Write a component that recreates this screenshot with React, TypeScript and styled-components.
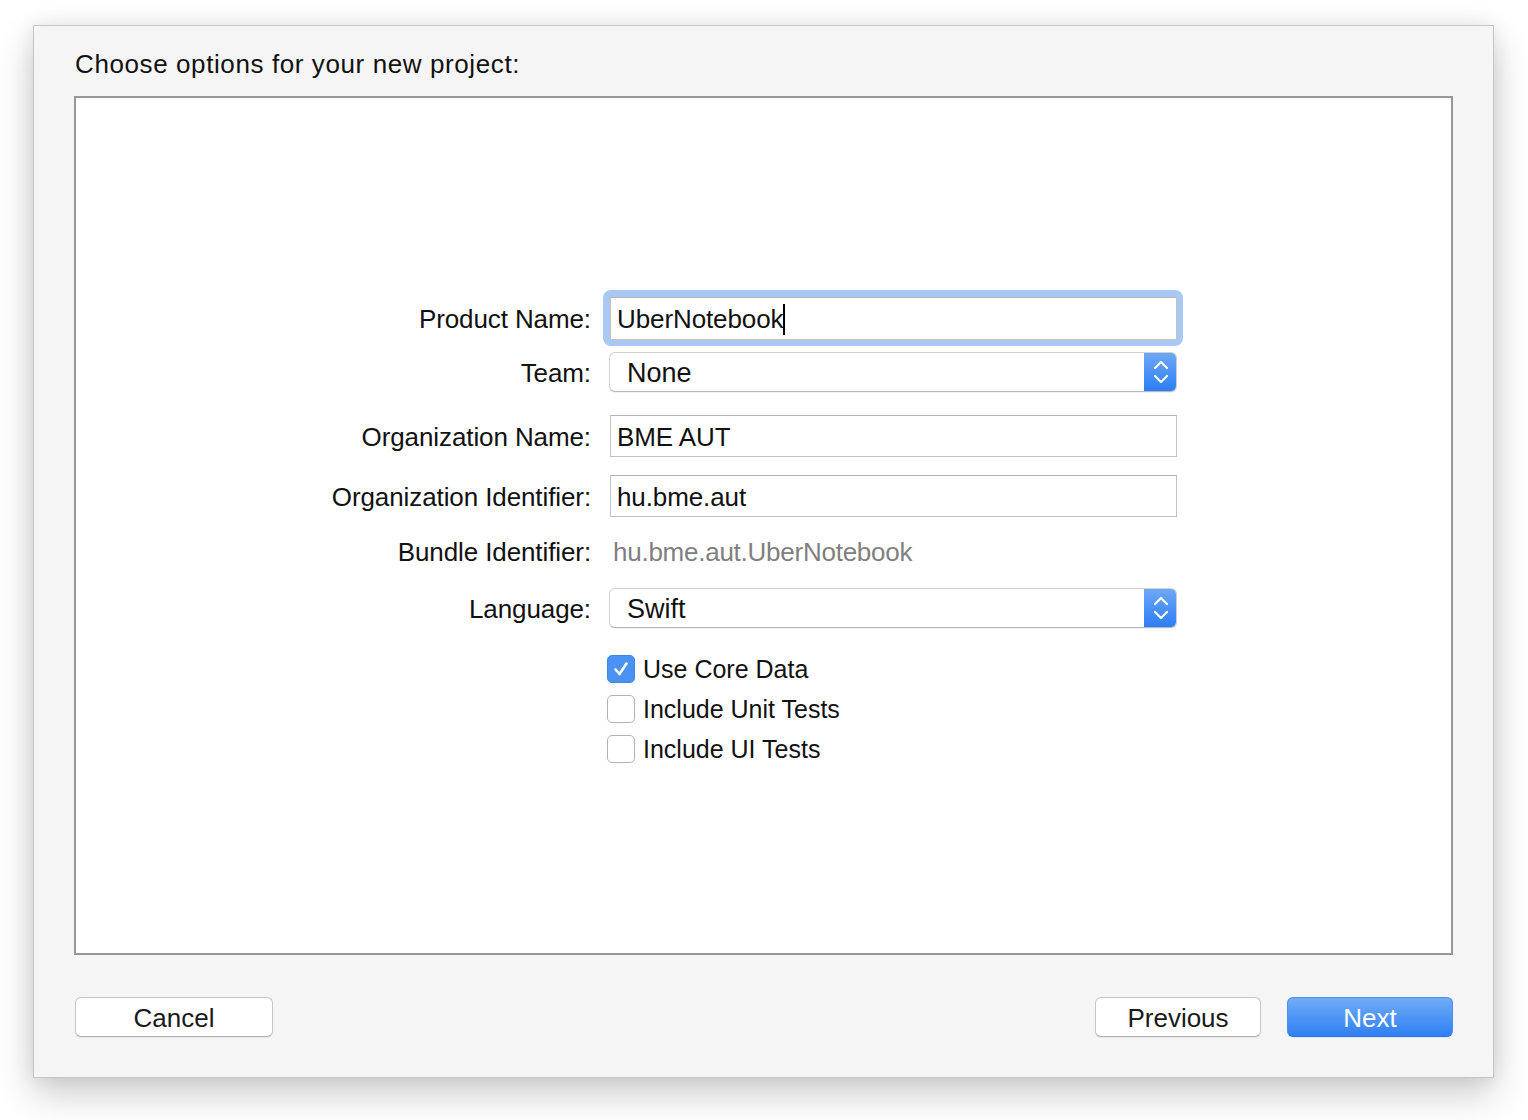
import styled, { createGlobalStyle } from 'styled-components';

const GlobalStyle = createGlobalStyle`
  html, body {
    margin: 0;
    padding: 0;
    background: #ffffff;
  }
  body {
    font-family: "Liberation Sans", Arial, Helvetica, sans-serif;
    color: #111;
    -webkit-font-smoothing: antialiased;
  }
`;

const Page = styled.div`
  width: 1528px;
  height: 1120px;
  padding: 25px 0 0 33px;
  box-sizing: border-box;
  overflow: hidden;
`;

const Window = styled.div`
  width: 1461px;
  height: 1053px;
  box-sizing: border-box;
  background: #f5f5f5;
  border: 1px solid #c4c4c4;
  box-shadow: 0 16px 36px rgba(0, 0, 0, 0.2), 0 0 18px rgba(0, 0, 0, 0.08);
  padding: 23px 40px 40px 40px;
  display: flex;
  flex-direction: column;
`;

const Title = styled.h1`
  margin: 0 0 17px 1px;
  font-size: 26px;
  line-height: 30px;
  font-weight: normal;
  color: #111;
  letter-spacing: 0.6px;
`;

const Panel = styled.div`
  height: 859px;
  box-sizing: border-box;
  border: 2px solid #979797;
  background: #ffffff;
  padding-top: 192px;
`;

const Form = styled.div`
  display: flex;
  flex-direction: column;
`;

const Row = styled.div<{ $h: number; $gap?: number }>`
  display: grid;
  grid-template-columns: 515px 568px;
  column-gap: 18px;
  align-items: center;
  height: ${(p) => p.$h}px;
  margin-top: ${(p) => p.$gap ?? 0}px;
`;

const Label = styled.div`
  text-align: right;
  font-size: 26px;
  line-height: 30px;
  padding-top: 2px;
  color: #111;
  letter-spacing: -0.1px;
`;

const FocusRing = styled.div`
  margin-left: -6px;
  width: 580px;
  height: 56px;
  box-sizing: border-box;
  padding: 7px 6px 6px 7px;
  border-radius: 8px;
  background: #a9c9f4;
`;

const TextField = styled.div<{ $focused?: boolean }>`
  position: relative;
  height: ${(p) => (p.$focused ? 43 : 42)}px;
  width: 567px;
  margin-left: ${(p) => (p.$focused ? 0 : 1)}px;
  box-sizing: border-box;
  background: #ffffff;
  border: 1px solid #c2c2c2;
  border-top-color: #b4b4b4;
  padding: 2px 6px 0;
  display: flex;
  align-items: center;
  font-size: 26px;
  letter-spacing: -0.1px;
  color: #111;
`;

const Caret = styled.span`
  display: inline-block;
  width: 2px;
  height: 31px;
  background: #000;
  margin-left: 0;
`;

const Popup = styled.div`
  height: 40px;
  box-sizing: border-box;
  border-radius: 6px;
  background: #ffffff;
  border: 1px solid #d0d0d0;
  border-bottom-color: #b8b8b8;
  box-shadow: 0 1px 1px rgba(0, 0, 0, 0.06);
  display: flex;
  align-items: center;
  overflow: hidden;
`;

const PopupText = styled.span`
  flex: 1;
  padding: 2px 0 0 17px;
  font-size: 27px;
  color: #111;
`;

const Stepper = styled.div`
  width: 33px;
  height: 40px;
  margin: -1px -1px -1px 0;
  background: linear-gradient(#6eaaf7, #2b7cf6);
  display: flex;
  align-items: center;
  justify-content: center;
`;

const StaticValue = styled.div`
  padding: 2px 0 0 4px;
  font-size: 26px;
  letter-spacing: -0.25px;
  color: #808080;
`;

const CheckRow = styled.label`
  grid-column: 2;
  display: flex;
  align-items: center;
  gap: 8px;
  margin-left: -2px;
  font-size: 25px;
  color: #111;
`;

const Box = styled.span<{ $on?: boolean }>`
  width: 28px;
  height: 28px;
  box-sizing: border-box;
  border-radius: 5px;
  display: flex;
  align-items: center;
  justify-content: center;
  background: ${(p) => (p.$on ? '#4a92f3' : '#ffffff')};
  border: 1px solid ${(p) => (p.$on ? '#3f86ea' : '#b3b3b3')};
`;

const Footer = styled.div`
  margin-top: 42px;
  display: flex;
  align-items: center;
  padding-left: 1px;
`;

const Spacer = styled.div`
  flex: 1;
`;

const Button = styled.button<{ $w: number; $primary?: boolean }>`
  width: ${(p) => p.$w}px;
  height: 40px;
  box-sizing: border-box;
  border-radius: 6px;
  font-family: inherit;
  font-size: 26px;
  padding: 2px 0 0;
  margin-left: ${(p) => (p.$primary ? 26 : 0)}px;
  color: ${(p) => (p.$primary ? '#ffffff' : '#1a1a1a')};
  background: ${(p) => (p.$primary ? 'linear-gradient(#70adf7, #2f7ff5)' : '#ffffff')};
  border: 1px solid ${(p) => (p.$primary ? '#4b8ff0' : '#c6c6c6')};
  border-bottom-color: ${(p) => (p.$primary ? '#2a72e0' : '#b0b0b0')};
  box-shadow: 0 1px 1px rgba(0, 0, 0, 0.06);
`;

function Chevrons() {
  return (
    <svg width="18" height="30" viewBox="0 0 18 30">
      <path d="M3 11 L9 5 L15 11" fill="none" stroke="#fff" strokeWidth="2.2" strokeLinecap="round" strokeLinejoin="round" />
      <path d="M3 19 L9 25 L15 19" fill="none" stroke="#fff" strokeWidth="2.2" strokeLinecap="round" strokeLinejoin="round" />
    </svg>
  );
}

function Check() {
  return (
    <svg width="20" height="20" viewBox="0 0 20 20">
      <path d="M4.5 10.5 L8.5 15 L15.5 4.5" fill="none" stroke="#fff" strokeWidth="2.6" strokeLinecap="round" strokeLinejoin="round" />
    </svg>
  );
}

export default function App() {
  return (
    <Page>
      <GlobalStyle />
      <Window>
        <Title>Choose options for your new project:</Title>
        <Panel>
          <Form>
            <Row $h={56}>
              <Label>Product Name:</Label>
              <FocusRing>
                <TextField $focused>
                  UberNotebook
                  <Caret />
                </TextField>
              </FocusRing>
            </Row>
            <Row $h={40} $gap={6}>
              <Label>Team:</Label>
              <Popup>
                <PopupText>None</PopupText>
                <Stepper>
                  <Chevrons />
                </Stepper>
              </Popup>
            </Row>
            <Row $h={42} $gap={23}>
              <Label>Organization Name:</Label>
              <TextField>BME AUT</TextField>
            </Row>
            <Row $h={42} $gap={18}>
              <Label>Organization Identifier:</Label>
              <TextField>hu.bme.aut</TextField>
            </Row>
            <Row $h={40} $gap={14}>
              <Label>Bundle Identifier:</Label>
              <StaticValue>hu.bme.aut.UberNotebook</StaticValue>
            </Row>
            <Row $h={40} $gap={17}>
              <Label>Language:</Label>
              <Popup>
                <PopupText>Swift</PopupText>
                <Stepper>
                  <Chevrons />
                </Stepper>
              </Popup>
            </Row>
            <Row $h={40} $gap={21}>
              <CheckRow>
                <Box $on>
                  <Check />
                </Box>
                Use Core Data
              </CheckRow>
            </Row>
            <Row $h={40}>
              <CheckRow>
                <Box />
                Include Unit Tests
              </CheckRow>
            </Row>
            <Row $h={40}>
              <CheckRow>
                <Box />
                Include UI Tests
              </CheckRow>
            </Row>
          </Form>
        </Panel>
        <Footer>
          <Button $w={198}>Cancel</Button>
          <Spacer />
          <Button $w={166}>Previous</Button>
          <Button $w={166} $primary>
            Next
          </Button>
        </Footer>
      </Window>
    </Page>
  );
}
